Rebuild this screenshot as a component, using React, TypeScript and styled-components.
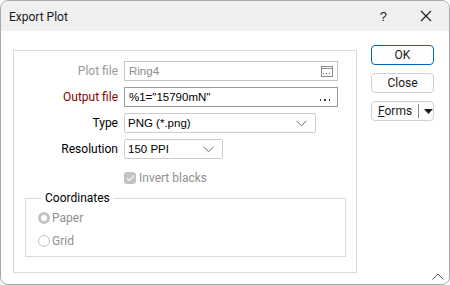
import styled, { createGlobalStyle } from "styled-components";

const GlobalStyle = createGlobalStyle`
  html, body {
    margin: 0;
    padding: 0;
    background: #ffffff;
  }
  body {
    font-family: Roboto, "Noto Sans", sans-serif;
    font-size: 12px;
    color: #000;
  }
`;

type fieldProps = { label: string; tone?: "disabled" | "required" | "normal" };

function FieldLabel({ label, tone = "normal" }: fieldProps) {
  return <StyledLabel $tone={tone}>{label}</StyledLabel>;
}

const Chevron = () => (
  <svg width="11" height="7" viewBox="0 0 11 7">
    <path d="M0.5 0.8 L5.5 5.8 L10.5 0.8" fill="none" stroke="#6b6b6b" strokeWidth="1" />
  </svg>
);

function App() {
  return (
    <>
      <GlobalStyle />
      <StyledWindow>
        <TitleBar>
          <TitleText>Export Plot</TitleText>
          <TitleButtons>
            <HelpGlyph>?</HelpGlyph>
            <svg width="12" height="12" viewBox="0 0 12 12">
              <path d="M1 1 L11 11 M11 1 L1 11" stroke="#1a1a1a" strokeWidth="1.1" />
            </svg>
          </TitleButtons>
        </TitleBar>

        <Body>
          <Panel>
            <FormGrid>
              <FieldLabel label="Plot file" tone="disabled" />
              <TextBox $width={214} $disabled>
                <span>Ring4</span>
                <svg width="12" height="11" viewBox="0 0 12 11">
                  <rect x="0.5" y="0.5" width="11" height="10" fill="none" stroke="#8c8c8c" />
                  <line x1="0.5" y1="2.5" x2="11.5" y2="2.5" stroke="#8c8c8c" />
                  <rect x="2" y="7" width="1" height="1" fill="#6e6e6e" />
                  <rect x="5" y="7" width="1" height="1" fill="#6e6e6e" />
                  <rect x="8" y="7" width="1" height="1" fill="#6e6e6e" />
                </svg>
              </TextBox>

              <FieldLabel label="Output file" tone="required" />
              <TextBox $width={214}>
                <span>%1="15790mN"</span>
                <Dots>
                  <i />
                  <i />
                  <i />
                </Dots>
              </TextBox>

              <FieldLabel label="Type" />
              <SelectBox $width={192}>
                <span>PNG (*.png)</span>
                <Chevron />
              </SelectBox>

              <FieldLabel label="Resolution" />
              <SelectBox $width={99}>
                <span>150 PPI</span>
                <Chevron />
              </SelectBox>

              <span />
              <CheckRow>
                <CheckBox>
                  <svg width="9" height="8" viewBox="0 0 9 8">
                    <path d="M1 4.2 L3.4 6.5 L8 1.5" fill="none" stroke="#fff" strokeWidth="1.1" />
                  </svg>
                </CheckBox>
                Invert blacks
              </CheckRow>
            </FormGrid>

            <GroupBox>
              <legend>Coordinates</legend>
              <RadioRow>
                <Radio $checked />
                Paper
              </RadioRow>
              <RadioRow>
                <Radio />
                Grid
              </RadioRow>
            </GroupBox>
          </Panel>

          <ButtonColumn>
            <Button $primary>OK</Button>
            <Button>Close</Button>
            <SplitButton>
              <span>
                <u>F</u>orms
              </span>
              <SplitDivider />
              <svg width="9" height="5" viewBox="0 0 9 5">
                <path d="M0 0 L9 0 L4.5 5 Z" fill="#1a1a1a" />
              </svg>
            </SplitButton>
          </ButtonColumn>
        </Body>

        <Footer>
          <svg width="12" height="7" viewBox="0 0 12 7">
            <path d="M0.5 6.5 L6 1 L11.5 6.5" fill="none" stroke="#5a5a5a" strokeWidth="1" />
          </svg>
        </Footer>
      </StyledWindow>
    </>
  );
}

export default App;

const StyledWindow = styled.div`
  width: 450px;
  height: 285px;
  box-sizing: border-box;
  border: 1px solid #a8a8a8;
  border-radius: 8px;
  overflow: hidden;
  display: flex;
  flex-direction: column;
  background: #fff;
`;

const TitleBar = styled.div`
  height: 30px;
  background: #f0f0f0;
  display: flex;
  align-items: center;
  justify-content: space-between;
  padding-left: 8px;
  padding-right: 17px;
  flex-shrink: 0;
`;

const TitleText = styled.div`
  color: #1a1a1a;
  padding-top: 1px;
`;

const TitleButtons = styled.div`
  display: flex;
  align-items: center;
  gap: 33px;
`;

const HelpGlyph = styled.span`
  font-family: "Liberation Sans", sans-serif;
  font-size: 13px;
  color: #1a1a1a;
`;

const Body = styled.div`
  display: flex;
  align-items: flex-start;
  padding-left: 12px;
  flex: 1;
`;

const Panel = styled.div`
  margin-top: 19px;
  width: 344px;
  height: 223px;
  box-sizing: border-box;
  border: 1px solid #dadada;
  padding: 10px 10px 0 11px;
`;

const FormGrid = styled.div`
  display: grid;
  grid-template-columns: 93px auto;
  column-gap: 6px;
  row-gap: 6px;
  align-items: center;
  justify-items: start;
`;

const StyledLabel = styled.span<{ $tone: string }>`
  justify-self: end;
  color: ${({ $tone }) =>
    $tone === "disabled" ? "#9a9a9a" : $tone === "required" ? "#8b0000" : "#000"};
`;

const TextBox = styled.div<{ $width: number; $disabled?: boolean }>`
  width: ${({ $width }) => $width}px;
  height: 20px;
  box-sizing: border-box;
  border: 1px solid ${({ $disabled }) => ($disabled ? "#c4c4c4" : "#9a9a9a")};
  display: flex;
  align-items: center;
  justify-content: space-between;
  padding: 0 4px 0 4px;
  font-family: "Liberation Sans", sans-serif;
  font-size: 11.5px;
  color: ${({ $disabled }) => ($disabled ? "#8a8a8a" : "#000")};
`;

const Dots = styled.span`
  display: flex;
  gap: 3px;
  align-items: flex-end;
  padding-top: 6px;
  margin-right: 3px;

  i {
    width: 1.5px;
    height: 1.5px;
    background: #3b2a8a;
  }
`;

const SelectBox = styled.div<{ $width: number }>`
  width: ${({ $width }) => $width}px;
  height: 20px;
  box-sizing: border-box;
  border: 1px solid #cdcdcd;
  border-radius: 2px;
  display: flex;
  align-items: center;
  justify-content: space-between;
  padding: 0 8px 0 3px;
  font-family: "Liberation Sans", sans-serif;
  font-size: 11.5px;
`;

const CheckRow = styled.div`
  display: flex;
  align-items: center;
  gap: 3px;
  margin-top: 6px;
  color: #8f8f8f;
`;

const CheckBox = styled.span`
  width: 12px;
  height: 12px;
  border-radius: 3px;
  background: #c3c3c3;
  display: flex;
  align-items: center;
  justify-content: center;
`;

const GroupBox = styled.fieldset`
  margin: 6px 0 0 0;
  width: 321px;
  height: 66px;
  box-sizing: border-box;
  border: 1px solid #dadada;
  padding: 1px 0 0 12px;

  legend {
    color: #000;
    padding: 0 4px 0 3px;
    margin-left: 4px;
  }
`;

const RadioRow = styled.div`
  display: flex;
  align-items: center;
  gap: 2px;
  height: 23px;
  color: #8f8f8f;
`;

const Radio = styled.span<{ $checked?: boolean }>`
  width: 12px;
  height: 12px;
  box-sizing: border-box;
  border-radius: 50%;
  border: ${({ $checked }) => ($checked ? "3.5px solid #c3c3c3" : "1px solid #c3c3c3")};
  background: #fff;
`;

const ButtonColumn = styled.div`
  margin-top: 14px;
  margin-left: 14px;
  display: flex;
  flex-direction: column;
  gap: 8px;
`;

const Button = styled.div<{ $primary?: boolean }>`
  width: 63px;
  height: 20px;
  box-sizing: border-box;
  border: 1px solid ${({ $primary }) => ($primary ? "#0067c0" : "#d0d0d0")};
  border-radius: 4px;
  background: #fdfdfd;
  display: flex;
  align-items: center;
  justify-content: center;
  color: #1a1a1a;
`;

const SplitButton = styled(Button)`
  justify-content: flex-start;
  padding-left: 6px;

  svg {
    margin-left: 5px;
  }
`;

const SplitDivider = styled.span`
  width: 1px;
  height: 14px;
  background: #8a8a8a;
  margin-left: 6px;
`;

const Footer = styled.div`
  height: 17px;
  display: flex;
  justify-content: flex-end;
  align-items: flex-start;
  padding-right: 5px;
`;
